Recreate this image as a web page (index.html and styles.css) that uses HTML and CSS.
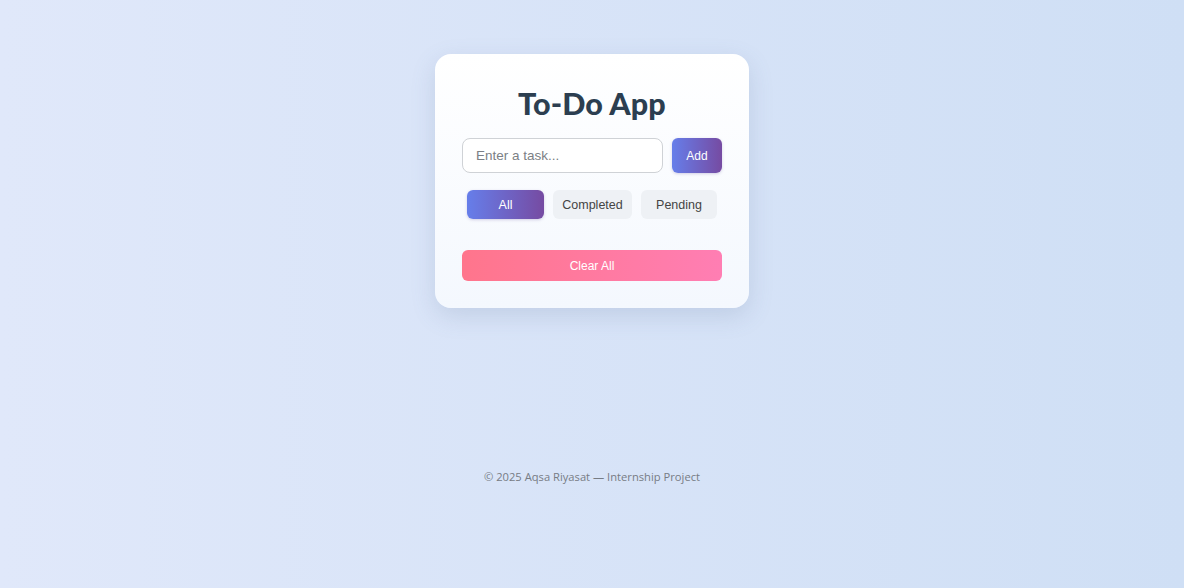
FILE: index.html
```html
<!DOCTYPE html>
<html lang="en">
<head>
<meta charset="utf-8">
<title>To-Do App</title>
<link rel="stylesheet" href="styles.css">
</head>
<body>
<main class="page">
  <section class="card">
    <h1 class="title">To-Do App</h1>
    <div class="add-row">
      <input class="task-input" type="text" placeholder="Enter a task...">
      <button class="btn-add">Add</button>
    </div>
    <div class="filters">
      <button class="filter active">All</button>
      <button class="filter">Completed</button>
      <button class="filter">Pending</button>
    </div>
    <ul class="list"></ul>
    <button class="btn-clear">Clear All</button>
  </section>
  <footer class="footer">© 2025 Aqsa Riyasat — Internship Project</footer>
</main>
</body>
</html>
```
FILE: styles.css
```css
* { box-sizing: border-box; }
html, body { height: 100%; }
body {
  margin: 0;
  font-family: "Liberation Sans", Arial, sans-serif;
  background: linear-gradient(90deg, #e0e8fa 0%, #cfdff5 100%);
}
.page {
  display: flex;
  flex-direction: column;
  align-items: center;
  padding-top: 54px;
}
.card {
  width: 314px;
  padding: 30px 27px 27px;
  border-radius: 16px;
  background: linear-gradient(180deg, #ffffff 0%, #f4f8fe 100%);
  box-shadow: 0 8px 24px rgba(90, 110, 150, 0.18);
}
.title {
  margin: 0 0 16px;
  text-align: center;
  font-family: Lato, "Open Sans", sans-serif;
  font-weight: 900;
  font-size: 30.5px;
  letter-spacing: 0.1px;
  line-height: 38px;
  color: #2c3e50;
}
.add-row {
  display: flex;
  gap: 9px;
  margin-bottom: 17px;
}
.task-input {
  flex: 1;
  height: 35px;
  min-width: 0;
  padding: 0 13px;
  border: 1px solid #cfd2d6;
  border-radius: 8px;
  background: #fff;
  font-family: "Liberation Sans", Arial, sans-serif;
  font-size: 13.5px;
  color: #333;
  outline: none;
}
.task-input::placeholder { color: #7b7f85; }
.btn-add {
  width: 50px;
  height: 35px;
  border: 0;
  border-radius: 6px;
  background: linear-gradient(90deg, #667eea 0%, #764ba2 100%);
  color: #fff;
  font-family: "Liberation Sans", Arial, sans-serif;
  font-size: 12px;
  box-shadow: 0 1px 3px rgba(90, 70, 150, 0.25);
}
.filters {
  display: flex;
  justify-content: center;
  gap: 9px;
  margin-bottom: 31px;
}
.filter {
  height: 29px;
  border: 0;
  border-radius: 6px;
  background: #eef1f5;
  color: #444;
  font-family: "Liberation Sans", Arial, sans-serif;
  font-size: 12.5px;
  padding: 0;
}
.filter:nth-child(1) { width: 77px; }
.filter:nth-child(2) { width: 79px; }
.filter:nth-child(3) { width: 76px; }
.filter.active {
  background: linear-gradient(90deg, #667eea 0%, #764ba2 100%);
  color: #fff;
  box-shadow: 0 1px 3px rgba(90, 70, 150, 0.25);
}
.list { margin: 0; padding: 0; list-style: none; }
.btn-clear {
  display: block;
  width: 100%;
  height: 31px;
  border: 0;
  border-radius: 6px;
  background: linear-gradient(90deg, #ff758c 0%, #ff7eb3 100%);
  color: #fff;
  font-family: "Liberation Sans", Arial, sans-serif;
  font-size: 12px;
}
.footer {
  margin-top: 161px;
  font-family: "Open Sans", sans-serif;
  font-size: 11.2px;
  line-height: 16px;
  color: #777c84;
}
```
